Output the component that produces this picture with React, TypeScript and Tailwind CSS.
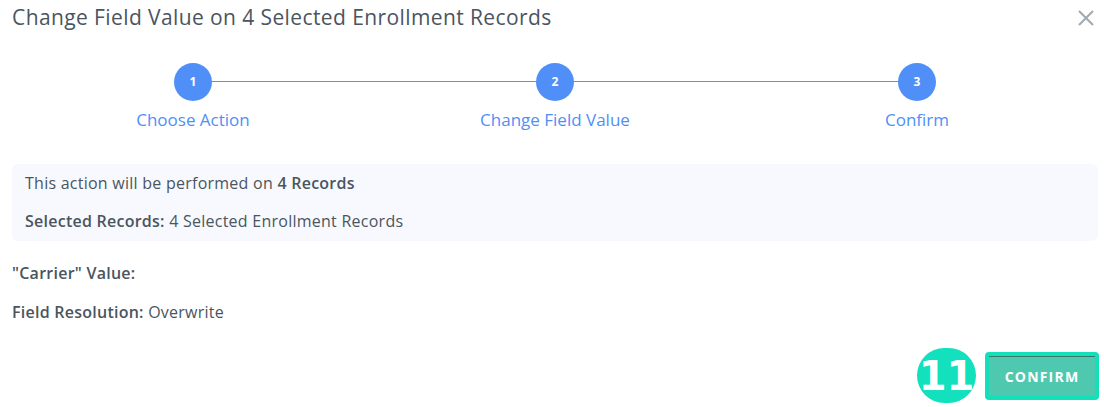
import React from 'react';

const steps = ['Choose Action', 'Change Field Value', 'Confirm'];

export default function App() {
  return (
    <div
      className="relative w-[1104px] h-[407px] bg-white text-[#4a5560] overflow-hidden"
      style={{ fontFamily: '"Open Sans", Lato, sans-serif' }}
    >
      {/* header */}
      <div className="flex items-center justify-between pl-3 pr-[6px] h-[34px] pt-[1px]">
        <h1 className="text-[21px] leading-none tracking-[0.4px] text-[#4a5560]">
          Change Field Value on 4 Selected Enrollment Records
        </h1>
        <button className="w-[24px] h-[24px] flex items-center justify-center text-[#a0a8b0]">
          <svg width="18" height="18" viewBox="0 0 18 18" fill="none" stroke="currentColor" strokeWidth="2">
            <path d="M2 2L16 16M16 2L2 16" />
          </svg>
        </button>
      </div>

      {/* stepper */}
      <div className="relative ml-3 mr-[6px] mt-[29px] grid grid-cols-3">
        <div className="absolute left-[181px] right-[181px] top-[18px] h-px bg-[#7d8ea3]" />
        {steps.map((label, i) => (
          <div key={label} className="relative flex flex-col items-center">
            <div className="w-[38px] h-[38px] rounded-full bg-[#4f8ff7] text-white text-[12px] font-bold flex items-center justify-center">
              {i + 1}
            </div>
            <div className="mt-[8px] text-[17px] leading-[22px] text-[#4f8ff7]">{label}</div>
          </div>
        ))}
      </div>

      {/* info box */}
      <div className="ml-3 mr-[6px] mt-[33px] rounded-md bg-[#f8f9fe] px-[13px] pt-[9px] pb-[9px] text-[16px] leading-[21px] tracking-[0.25px]">
        <p>
          This action will be performed on <span className="font-semibold">4 Records</span>
        </p>
        <p className="mt-[17px]">
          <span className="font-semibold">Selected Records:</span> 4 Selected Enrollment Records
        </p>
      </div>

      <div className="px-3 mt-[22px] text-[16px] leading-[21px] tracking-[0.25px]">
        <p className="font-semibold">"Carrier" Value:</p>
        <p className="mt-[18px]">
          <span className="font-semibold">Field Resolution:</span> Overwrite
        </p>
      </div>

      {/* footer */}
      <div className="absolute right-[5px] bottom-[4px] flex items-center gap-[9px]">
        <div className="w-[59px] h-[55px] rounded-full bg-[#13e0bc] text-white text-[40px] font-black leading-none flex items-center justify-center" style={{ fontFamily: '"DejaVu Sans", sans-serif' }}>
          11
        </div>
        <div className="w-[114px] h-[48px] rounded-[4px] bg-[#13e0b9] p-[4px]">
          <div className="w-full h-full bg-[#4fc8b0] border-t border-[#2f7a6a] flex items-center justify-center text-white text-[14px] font-bold tracking-[1.2px]">
            CONFIRM
          </div>
        </div>
      </div>
    </div>
  );
}
